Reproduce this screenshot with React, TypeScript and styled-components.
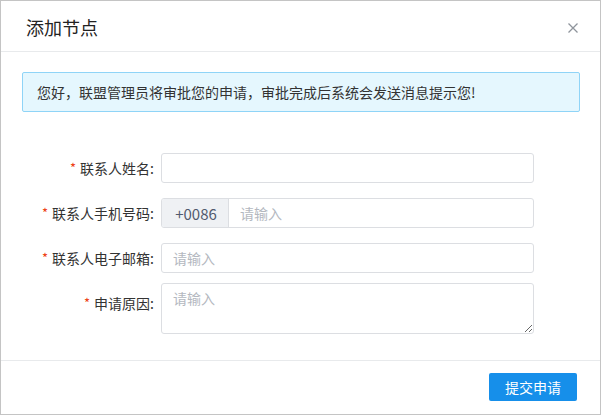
import { FC } from 'react'
import styled, { createGlobalStyle } from 'styled-components'

const GlobalStyle = createGlobalStyle`
  html, body {
    margin: 0;
    padding: 0;
    background: #fff;
  }
  body {
    font-family: "Noto Sans CJK SC", "Noto Sans", sans-serif;
    font-size: 14px;
    color: #333;
  }
  * {
    box-sizing: border-box;
  }
`

const Modal = styled('div')`
  width: 601px;
  height: 415px;
  border: 1px solid #c4c4c4;
  display: flex;
  flex-direction: column;
  background: #fff;
`

const Header = styled('div')`
  height: 51px;
  flex: none;
  display: flex;
  align-items: center;
  justify-content: space-between;
  padding: 0 17px 0 25px;
  border-bottom: 1px solid #e8eaec;
`

const Title = styled('h2')`
  margin: 0;
  font-size: 18px;
  font-weight: 400;
  color: #222;
  line-height: 24px;
  padding-top: 2px;
`

const CloseButton = styled('button')`
  width: 20px;
  height: 20px;
  padding: 0;
  border: none;
  background: transparent;
  display: flex;
  align-items: center;
  justify-content: center;
  cursor: pointer;
  margin-top: 4px;
`

const Body = styled('div')`
  flex: 1;
  padding: 20px 20px 25px 21px;
`

const Alert = styled('div')`
  height: 40px;
  display: flex;
  align-items: center;
  padding: 0 14px;
  background: #e5f7fe;
  border: 1px solid #8fd4f7;
  border-radius: 2px;
  color: #333;
  font-size: 14px;
`

const Form = styled('form')`
  margin-top: 41px;
  display: flex;
  flex-direction: column;
`

const Row = styled('div')<{ $top?: boolean; $gap: number }>`
  display: flex;
  align-items: ${(p) => (p.$top ? 'flex-start' : 'center')};
  margin-top: ${(p) => p.$gap}px;
`

const Label = styled('label')<{ $top?: boolean }>`
  width: 139px;
  flex: none;
  text-align: right;
  padding-right: 7px;
  line-height: 20px;
  color: #333;
  padding-top: ${(p) => (p.$top ? '10px' : '0')};

  &::before {
    content: '*';
    color: #ed4014;
    margin-right: 4px;
    font-size: 13px;
    position: relative;
    top: -1px;
  }
`

const Field = styled('div')`
  width: 373px;
  height: 30px;
  display: flex;
  border: 1px solid #dcdee2;
  border-radius: 3px;
  overflow: hidden;
  background: #fff;
`

const Prefix = styled('span')`
  width: 67px;
  flex: none;
  display: flex;
  align-items: center;
  justify-content: center;
  background: #eff1f4;
  border-right: 1px solid #dcdee2;
  color: #515a6e;
  font-size: 15px;
  padding-left: 2px;
`

const Input = styled('input')`
  flex: 1;
  min-width: 0;
  height: 100%;
  border: none;
  outline: none;
  padding: 0 11px;
  font-family: inherit;
  font-size: 14px;
  color: #515a6e;
  background: transparent;

  &::placeholder {
    color: #b4b8bf;
  }
`

const TextArea = styled('textarea')`
  width: 373px;
  height: 51px;
  border: 1px solid #dcdee2;
  border-radius: 3px;
  padding: 4px 11px;
  font-family: inherit;
  font-size: 14px;
  line-height: 20px;
  color: #515a6e;
  outline: none;
  resize: vertical;

  &::placeholder {
    color: #b4b8bf;
  }
`

const Footer = styled('div')`
  height: 54px;
  flex: none;
  border-top: 1px solid #e8eaec;
  display: flex;
  justify-content: flex-end;
  padding: 12px 23px 0 0;
`

const SubmitButton = styled('button')`
  height: 28px;
  padding: 0 16px;
  border: none;
  border-radius: 2px;
  background: #168fea;
  color: #fff;
  font-family: inherit;
  font-size: 14px;
  cursor: pointer;
`

const App: FC = () => {
  return (
    <>
      <GlobalStyle />
      <Modal>
        <Header>
          <Title>添加节点</Title>
          <CloseButton type="button" aria-label="关闭">
            <svg width="12" height="12" viewBox="0 0 12 12">
              <path
                d="M1.5 1.5L10.5 10.5M10.5 1.5L1.5 10.5"
                stroke="#8f949c"
                strokeWidth="1.3"
                fill="none"
              />
            </svg>
          </CloseButton>
        </Header>
        <Body>
          <Alert>您好，联盟管理员将审批您的申请，审批完成后系统会发送消息提示您!</Alert>
          <Form>
            <Row $gap={0}>
              <Label>联系人姓名:</Label>
              <Field>
                <Input />
              </Field>
            </Row>
            <Row $gap={15}>
              <Label>联系人手机号码:</Label>
              <Field>
                <Prefix>+0086</Prefix>
                <Input placeholder="请输入" />
              </Field>
            </Row>
            <Row $gap={15}>
              <Label>联系人电子邮箱:</Label>
              <Field>
                <Input placeholder="请输入" />
              </Field>
            </Row>
            <Row $gap={10} $top>
              <Label $top>申请原因:</Label>
              <TextArea placeholder="请输入" />
            </Row>
          </Form>
        </Body>
        <Footer>
          <SubmitButton type="button">提交申请</SubmitButton>
        </Footer>
      </Modal>
    </>
  )
}

export default App
